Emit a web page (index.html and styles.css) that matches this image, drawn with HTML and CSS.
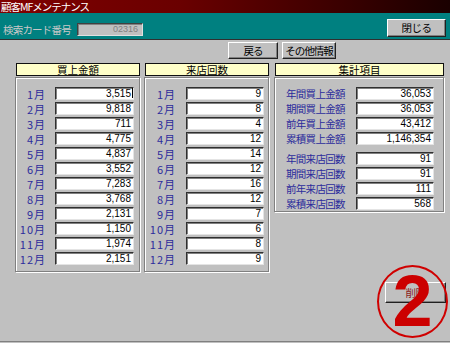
FILE: index.html
```html
<!DOCTYPE html>
<html>
<head>
    <link rel="stylesheet" href="styles.css">
</head>
<body>
    <div class="window">
        <div class="titlebar">顧客MFメンテナンス</div>

        <div class="searchbar">
            <span class="search-label">検索カード番号</span>
            <div class="search-field">02316</div>
            <button class="btn close-btn">閉じる</button>
        </div>

        <div class="toolbar">
            <button class="btn tool-btn back-btn">戻る</button>
            <button class="btn tool-btn">その他情報</button>
        </div>

        <div class="columns">
            <div class="column col-sales">
                <div class="col-header">買上金額</div>
                <div class="panel" id="salesPanel"></div>
            </div>
            <div class="column col-visits">
                <div class="col-header">来店回数</div>
                <div class="panel" id="visitsPanel"></div>
            </div>
            <div class="column col-summary">
                <div class="col-header">集計項目</div>
                <div class="panel summary-panel">
                    <div class="row"><span class="label">年間買上金額</span><div class="field">36,053</div></div>
                    <div class="row"><span class="label">期間買上金額</span><div class="field">36,053</div></div>
                    <div class="row"><span class="label">前年買上金額</span><div class="field">43,412</div></div>
                    <div class="row"><span class="label">累積買上金額</span><div class="field">1,146,354</div></div>
                    <div class="row group-start"><span class="label">年間来店回数</span><div class="field">91</div></div>
                    <div class="row"><span class="label">期間来店回数</span><div class="field">91</div></div>
                    <div class="row"><span class="label">前年来店回数</span><div class="field">111</div></div>
                    <div class="row"><span class="label">累積来店回数</span><div class="field">568</div></div>
                </div>
            </div>
        </div>

        <div class="footer">
            <button class="btn delete-btn">削除</button>
            <div class="marker">2</div>
        </div>
    </div>

    <script>
        const sales = ['3,515', '9,818', '711', '4,775', '4,837', '3,552',
                       '7,283', '3,768', '2,131', '1,150', '1,974', '2,151'];
        const visits = ['9', '8', '4', '12', '14', '12', '16', '12', '7', '6', '8', '9'];

        function fillPanel(id, values) {
            let html = '';
            values.forEach((v, i) => {
                const caret = (id === 'salesPanel' && i === 0) ? '<span class="caret"></span>' : '';
                html += `<div class="row"><span class="label month">${i + 1}月</span><div class="field">${v}${caret}</div></div>`;
            });
            document.getElementById(id).innerHTML = html;
        }

        fillPanel('salesPanel', sales);
        fillPanel('visitsPanel', visits);
    </script>
</body>
</html>
```

FILE: styles.css
```css
html {
    background: #c0c0c0;
}

body {
    margin: 0;
    font-family: "Noto Sans CJK JP", sans-serif;
    font-size: 10px;
}

.window {
    position: relative;
    width: 450px;
    height: 342px;
    box-sizing: border-box;
    border-bottom: 1px solid #808080;
    background: #c0c0c0;
}

.titlebar {
    height: 13px;
    line-height: 13px;
    padding-left: 1px;
    color: #fff;
    font-size: 10.5px;
    letter-spacing: -1px;
    background: linear-gradient(to right, #800000, #6a0000 40%, #1a0000);
}

.searchbar {
    display: flex;
    align-items: flex-start;
    height: 27px;
    box-sizing: border-box;
    background: #008080;
    border-bottom: 1px solid #303030;
    padding-left: 3px;
}

.search-label {
    margin-top: 9px;
    color: #c8c8c8;
    font-size: 10.5px;
    letter-spacing: -0.8px;
    width: 74px;
    white-space: nowrap;
}

.search-field {
    margin-top: 10px;
    width: 66px;
    height: 13px;
    box-sizing: border-box;
    border: 1px solid;
    border-color: #404040 #e0e0e0 #e0e0e0 #404040;
    box-shadow: inset 1px 1px #808080;
    background: #c0c0c0;
    color: #808080;
    text-align: right;
    padding-right: 4px;
    font-family: "Liberation Sans", sans-serif;
    font-size: 9px;
    line-height: 11px;
}

.btn {
    font-family: "Noto Sans CJK JP", sans-serif;
    font-size: 10.5px;
    color: #000;
    background: #c0c0c0;
    border: 1px solid;
    border-color: #fff #202020 #202020 #fff;
    box-shadow: inset -1px -1px #808080;
    padding: 0;
    line-height: 14px;
    letter-spacing: -0.5px;
    white-space: nowrap;
}

.close-btn {
    margin-top: 6px;
    margin-left: auto;
    margin-right: 4px;
    width: 59px;
    height: 18px;
}

.toolbar {
    display: flex;
    gap: 4px;
    padding: 2px 0 0 228px;
    height: 23px;
    box-sizing: border-box;
}

.tool-btn {
    height: 17px;
    width: 54px;
    letter-spacing: -1px;
}

.back-btn {
    width: 50px;
}

.columns {
    display: flex;
    align-items: flex-start;
    padding-left: 15px;
    gap: 4px;
}

.col-sales,
.col-visits {
    width: 125px;
}

.col-summary {
    width: 170px;
    margin-left: 1px;
}

.col-header {
    height: 13px;
    line-height: 12px;
    box-sizing: border-box;
    margin-left: 1px;
    border: 1px solid #101010;
    background: #ffffc8;
    text-align: center;
    font-size: 10.5px;
}

.panel {
    margin-top: 1px;
    border: 1px solid #808080;
    box-shadow: inset 1px 1px #fff, 1px 1px #fff;
    padding: 9px 0 4px 2px;
}

.summary-panel {
    padding-bottom: 0;
}

.row {
    display: flex;
    align-items: center;
    height: 13px;
    margin-bottom: 2px;
}

.summary-panel .row:last-child {
    margin-bottom: 1px;
}

.group-start {
    margin-top: 7px;
}

.label {
    color: #2c2c9c;
    font-size: 10.5px;
    letter-spacing: -0.7px;
    white-space: nowrap;
    flex-shrink: 0;
}

.month {
    width: 28px;
    text-align: right;
    font-size: 11px;
    letter-spacing: 1px;
    margin-right: 9px;
}

.col-visits .month {
    width: 29px;
    margin-right: 10px;
}

.summary-panel .label {
    width: 70px;
    padding-left: 9px;
}

.field {
    position: relative;
    flex-shrink: 0;
    width: 79px;
    height: 13px;
    box-sizing: border-box;
    border: 1px solid;
    border-color: #303030 #e4e4e4 #e4e4e4 #303030;
    box-shadow: inset 1px 1px #808080;
    background: #fff;
    text-align: right;
    padding-right: 2px;
    font-family: "Liberation Sans", sans-serif;
    font-size: 10px;
    line-height: 11px;
    color: #000;
}

.col-visits .field,
.summary-panel .field {
    width: 78px;
}

.caret {
    position: absolute;
    right: 0;
    top: 0;
    width: 1px;
    height: 10px;
    background: #000;
}

.footer {
    position: relative;
    display: flex;
    justify-content: flex-end;
    padding: 10px 4px 0 0;
}

.delete-btn {
    width: 61px;
    height: 21px;
    color: #8a2020;
}

.marker {
    position: absolute;
    left: 377px;
    top: -7px;
    width: 71px;
    height: 73px;
    box-sizing: border-box;
    border: 2px solid #d00000;
    border-radius: 50%;
    color: #cc0000;
    font-family: "Liberation Sans", sans-serif;
    font-weight: bold;
    font-size: 72px;
    line-height: 69px;
    text-align: center;
}
```
